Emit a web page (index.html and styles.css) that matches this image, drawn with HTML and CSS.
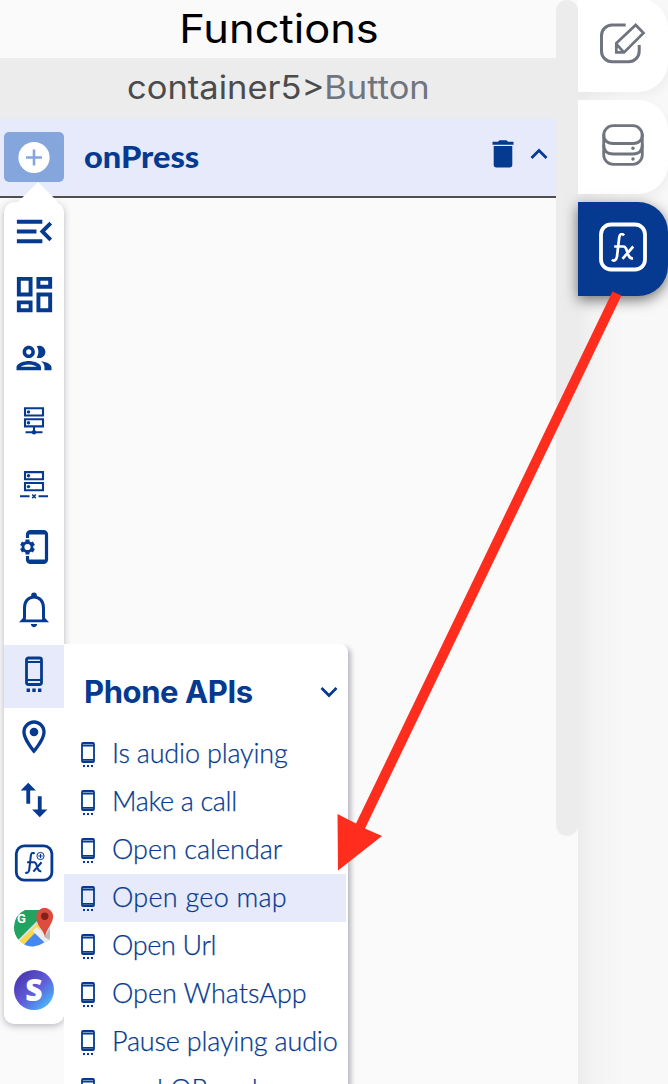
FILE: index.html
```html
<!DOCTYPE html>
<html lang="en">
<head>
<meta charset="utf-8">
<title>Functions</title>
<link rel="stylesheet" href="styles.css">
</head>
<body>
<svg class="defs" aria-hidden="true">
  <symbol id="phone" viewBox="0 0 40 40">
    <rect x="12.500" y="4" width="15" height="26.500" rx="2" fill="none" stroke="currentColor" stroke-width="2.800"/>
    <path d="M12 8h16M12 26h16" stroke="currentColor" stroke-width="2"/>
    <path d="M12.600 36.300H16M18.300 36.300h3.400M24 36.300h3.400" stroke="currentColor" stroke-width="3.400"/>
  </symbol>
  <symbol id="phone-small" viewBox="0 0 14 27">
    <path d="M2 2h10a1 1 0 0 1 1 1v17a1 1 0 0 1-1 1H2a1 1 0 0 1-1-1V3a1 1 0 0 1 1-1zM1 4.500h12M1 18.800h12" fill="none" stroke="currentColor" stroke-width="1.800"/>
    <path d="M2 24.900h2M6 24.900h2M10 24.900h2" stroke="currentColor" stroke-width="2"/>
  </symbol>
  <symbol id="fx" viewBox="0 0 24 29">
    <path d="M13 2.500C11-.2 8.800.9 8.200 4.500L6 23.500C5.300 27.500 2.700 28.500.9 26.600M3.200 13.500h9.300c1.800 0 2.500 1.500 3.300 4l1.600 4.500c.8 2.200 1.800 3.800 4.600 3.300M22.300 13.500L11.500 25.800" fill="none" stroke="currentColor" stroke-width="2.700"/>
  </symbol>
</svg>

<div class="app">
  <main class="panel">
    <h1 class="title"><span>Functions</span></h1>
    <div class="crumb"><span class="path">container5&gt;<span class="leaf">Button</span></span></div>
    <div class="event">
      <button class="add" aria-label="Add"><svg width="32" height="32" viewBox="0 0 32 32"><circle cx="16" cy="16.500" r="15.600" fill="#fff"/><path d="M16 8.500v16M8 16.500h16" stroke="#84a6dc" stroke-width="2.600"/></svg></button>
      <h2 class="event-name">onPress</h2>
      <svg class="trash" width="22" height="28" viewBox="0 0 22 28" fill="currentColor"><path d="M.5 1.700H6L7.500.3h7L16 1.700h5.500v3H.5zM1.700 6h18.600v18.800a2.700 2.700 0 0 1-2.700 2.700H4.400a2.700 2.700 0 0 1-2.700-2.700z"/></svg>
      <svg class="chev" width="18" height="12" viewBox="0 0 18 12"><path d="M1.500 10L9 2.500l7.500 7.500" fill="none" stroke="currentColor" stroke-width="2.700"/></svg>
    </div>

    <nav class="rail">
      <div class="cell"><svg width="47" height="47" viewBox="0 0 24 24" fill="currentColor"><path d="M3 18h13v-2H3v2zm0-5h10v-2H3v2zm0-7v2h13V6H3zm18 9.590L17.420 12 21 8.410 19.590 7l-5 5 5 5L21 15.590z"/></svg></div>
      <div class="cell"><svg width="47" height="47" viewBox="0 0 24 24" fill="currentColor"><path d="M19 5v2h-4V5h4M9 5v6H5V5h4m10 8v6h-4v-6h4M9 17v2H5v-2h4M21 3h-8v6h8V3zM11 3H3v10h8V3zm10 8h-8v10h8V11zm-10 4H3v6h8v-6z"/></svg></div>
      <div class="cell"><svg width="42" height="42" viewBox="0 0 24 24" fill="currentColor"><path d="M9 13.750c-2.340 0-7 1.170-7 3.500V19h14v-1.750c0-2.330-4.660-3.500-7-3.500zM4.340 17c.84-.58 2.870-1.250 4.660-1.250s3.820.67 4.660 1.250H4.340zM9 12c1.930 0 3.500-1.570 3.500-3.500S10.930 5 9 5 5.500 6.570 5.500 8.500 7.070 12 9 12zm0-5c.83 0 1.500.67 1.500 1.500S9.830 10 9 10s-1.500-.67-1.500-1.500S8.170 7 9 7zm7.040 6.810c1.160.84 1.960 1.960 1.960 3.440V19h4v-1.750c0-2.020-3.500-3.170-5.960-3.440zM15 12c1.930 0 3.500-1.570 3.500-3.500S16.930 5 15 5c-.54 0-1.040.13-1.500.35.63.89 1 1.980 1 3.150s-.37 2.260-1 3.150c.46.22.96.35 1.500.35z"/></svg></div>
      <div class="cell"><svg width="40" height="40" viewBox="0 0 40 40" fill="none" stroke="currentColor" stroke-width="2.100"><path d="M11 7.300h18v7.200H11zM11 18.200h18v7.200H11zM20 25v6M11.500 31.300h17"/><g fill="currentColor" stroke="none"><circle cx="14.500" cy="10.900" r="1.700"/><circle cx="14.500" cy="21.800" r="1.700"/><circle cx="20" cy="31.300" r="2.200"/></g></svg></div>
      <div class="cell"><svg width="40" height="40" viewBox="0 0 40 40" fill="none" stroke="currentColor" stroke-width="2.100"><path d="M11 8.100h18v7.200H11zM11 19h18v7.200H11zM6 32.300h9.500M24.500 32.300H34"/><path d="M18.200 30.500l3.600 3.600M21.800 30.500l-3.600 3.600" stroke-width="1.500"/><g fill="currentColor" stroke="none"><circle cx="14.500" cy="11.700" r="1.700"/><circle cx="14.500" cy="22.600" r="1.700"/></g></svg></div>
      <div class="cell"><svg width="40" height="40" viewBox="0 0 40 40" fill="none" stroke="currentColor"><path d="M13.500 11V7.500a3 3 0 0 1 3-3H29.500a3 3 0 0 1 3 3v25a3 3 0 0 1-3 3h-13a3 3 0 0 1-3-3V29" stroke-width="3.200"/><path d="M15 6h16M15 34h16" stroke-width="3"/><circle cx="13.500" cy="20" r="4.500" stroke-width="2.800"/><path d="M13.500 12.600v3M13.500 24.400v3M7.100 16.300l2.600 1.500M17.300 22.200l2.600 1.500M7.100 23.700l2.600-1.500M17.300 17.800l2.600-1.500" stroke-width="4"/></svg></div>
      <div class="cell"><svg width="40" height="40" viewBox="0 0 40 40" fill="none" stroke="currentColor" stroke-width="3"><path d="M10.500 31V18c0-6.500 3.700-11 9.500-11s9.500 4.500 9.500 11v13"/><path d="M5 32.300l4-4.200h22l4 4.200z" fill="currentColor" stroke="none"/><path d="M11.900 27h16.200v2.500H11.900z" fill="#fff" stroke="none"/><path d="M17.200 7V5.200a2.800 2.800 0 0 1 5.600 0V7zM16.800 34h6.400c-.5 4.200-5.900 4.200-6.400 0z" fill="currentColor" stroke="none"/></svg></div>
      <div class="cell on"><svg width="40" height="40"><use href="#phone"/></svg></div>
      <div class="cell"><svg width="40" height="40" viewBox="0 0 24 24" fill="currentColor"><path d="M12 2C8.130 2 5 5.130 5 9c0 5.250 7 13 7 13s7-7.750 7-13c0-3.870-3.130-7-7-7zM7 9c0-2.760 2.240-5 5-5s5 2.240 5 5c0 2.880-2.880 7.190-5 9.880C9.920 16.210 7 11.850 7 9z"/><circle cx="12" cy="9" r="2.600"/></svg></div>
      <div class="cell"><svg width="46" height="46" viewBox="0 0 24 24" fill="currentColor"><path d="M16 17.010V10h-2v7.010h-3L15 21l4-3.990h-3zM9 3L5 6.990h3V14h2V6.990h3L9 3z"/></svg></div>
      <div class="cell"><svg width="40" height="40" viewBox="0 0 40 40"><rect x="2.300" y="2.800" width="35.600" height="34.400" rx="8" fill="none" stroke="currentColor" stroke-width="2.800"/><use href="#fx" x="10" y="9" width="19.500" height="22"/><circle cx="26.500" cy="13" r="3.600" fill="#fff" stroke="currentColor" stroke-width="1"/><path d="M26.500 10.800v4.400M24.300 13h4.400" stroke="currentColor" stroke-width="1.100"/></svg></div>
      <div class="cell"><svg width="40" height="40" viewBox="0 0 40 40">
        <clipPath id="disc"><path d="M11 3A19.500 19.500 0 0 0 0 20a19 19 0 0 0 19.500 19.500A26 26 0 0 0 31 35q5 0 5-5V3z"/></clipPath>
        <g clip-path="url(#disc)"><path d="M0 3h37v37H0z" fill="#dedede"/><path d="M0 0h37L0 37z" fill="#21a362"/><path d="M7 41L21.500 24 38 41z" fill="#4688f1"/><path d="M2 37.500L23.500 16.500l3.500 3.500L7 40z" fill="#fcd749"/><path d="M18.500 24l4-4 17 17v7z" fill="#eee"/><path d="M30.500 30L37 20v14z" fill="#bbb"/></g>
        <path d="M31 30.500c-1-8-8.500-11-8.500-19.500a8.400 8.400 0 0 1 5-9.500q3-1.500 6 0a8.400 8.400 0 0 1 5.500 9.500C38 18 32 22 31 30.500z" fill="#dd4b3e"/><circle cx="30.700" cy="9.200" r="3.700" fill="#80221c"/>
        <text class="map-g" x="3" y="16">G</text></svg></div>
      <div class="cell"><svg width="40" height="40" viewBox="0 0 40 40"><defs><linearGradient id="sky" x1=".1" y1=".1" x2=".9" y2=".95"><stop offset="0" stop-color="#4936b0"/><stop offset=".5" stop-color="#625bd8"/><stop offset=".75" stop-color="#508eea"/><stop offset="1" stop-color="#4fc4fb"/></linearGradient></defs><circle cx="20" cy="20" r="20" fill="url(#sky)"/><text class="disc-s" x="20" y="30.500" text-anchor="middle">S</text></svg></div>
    </nav>

    <section class="menu">
      <header class="menu-head"><h3>Phone APIs</h3><svg width="18" height="12" viewBox="0 0 18 12"><path d="M1.500 2L9 9.500 16.500 2" fill="none" stroke="currentColor" stroke-width="2.700"/></svg></header>
      <ul>
        <li class="snug"><svg class="mini"><use href="#phone-small"/></svg><span>Is audio playing</span></li>
        <li class="tight"><svg class="mini"><use href="#phone-small"/></svg><span>Make a call</span></li>
        <li><svg class="mini"><use href="#phone-small"/></svg><span>Open calendar</span></li>
        <li class="on loose"><svg class="mini"><use href="#phone-small"/></svg><span>Open geo map</span></li>
        <li class="tight"><svg class="mini"><use href="#phone-small"/></svg><span>Open Url</span></li>
        <li><svg class="mini"><use href="#phone-small"/></svg><span>Open WhatsApp</span></li>
        <li class="snug"><svg class="mini"><use href="#phone-small"/></svg><span>Pause playing audio</span></li>
        <li><svg class="mini"><use href="#phone-small"/></svg><span>read QR code</span></li>
      </ul>
    </section>
  </main>

  <div class="track"><div class="thumb"></div></div>

  <aside class="tabs">
    <div class="tab"><svg width="48" height="46" viewBox="0 0 48 46" fill="none" stroke="#6f747e" stroke-width="3"><path d="M26.700 5H13a10.500 10.500 0 0 0-10.500 10.500v15.700A10.500 10.500 0 0 0 13 41.700h16.700a10.500 10.500 0 0 0 10.500-10.500v-6.200"/><path d="M17.300 23.200L36.700 5l7.800 8-19.500 19.400h-7.700zM17.300 24l7.700 8.400" stroke-width="2.700"/></svg></div>
    <div class="tab"><svg width="44" height="44" viewBox="0 0 44 44" fill="none" stroke="#6f747e" stroke-width="2.800"><rect x="2.700" y="2.700" width="38.600" height="38.600" rx="9.500"/><path d="M2.700 11q0 9.500 9.500 9.500h19.600q9.500 0 9.500-9.500M2.700 21.500q0 9.500 9.500 9.500h19.600q9.500 0 9.500-9.500"/><circle cx="32" cy="25.200" r="1.700" fill="#6f747e" stroke="none"/><circle cx="32" cy="36" r="1.700" fill="#6f747e" stroke="none"/></svg></div>
    <div class="tab active"><svg width="48" height="50" viewBox="0 0 48 50"><rect x="2" y="2.500" width="44" height="45" rx="10" fill="none" stroke="currentColor" stroke-width="3.800"/><use href="#fx" x="12" y="11" width="24" height="29"/></svg></div>
  </aside>
</div>

<svg class="pointer" width="668" height="1084" viewBox="0 0 668 1084" fill="#ff2d1e"><path d="M612.500 291.500L621.500 295.500 365 828.500l17 7.500L338 870.500 337.500 814l18.500 9.500z"/></svg>
</body>
</html>
```
FILE: styles.css
```css
* { box-sizing: border-box; margin: 0; padding: 0; }
body { width: 668px; height: 1084px; overflow: hidden; background: #fafafa; color: #053a90; font-family: Lato, "Liberation Sans", sans-serif; }
svg { display: block; flex: none; overflow: visible; }
.defs { position: absolute; width: 0; height: 0; }
.app { display: grid; grid-template-columns: 556px 22px 90px; height: 1084px; }

.panel { position: relative; height: 1084px; overflow: hidden; }
.title { height: 58px; display: flex; justify-content: center; align-items: center; color: #000; font: 400 40px/56px Inter, sans-serif; padding-left: 2px; }
.title span { transform: scaleX(1.085); }
.crumb { height: 60px; display: flex; justify-content: center; align-items: center; background: #ececec; color: #4b4b4b; font: 400 32px/58px Inter, sans-serif; }
.path { transform: scaleX(1.078); }
.leaf { color: #6f747e; }
.event { height: 80px; display: flex; align-items: center; padding: 0 8px 0 4px; background: #e6eafb; border-bottom: 2px solid #4f4f4f; }
.add { width: 60px; height: 50px; display: flex; align-items: center; justify-content: center; border: 0; border-radius: 5px; background: #84a6dc; margin-right: 20px; }
.event-name { flex: 1; font: 900 30px/40px Lato, sans-serif; transform: scaleX(1.085); transform-origin: left; padding-bottom: 2px; }
.trash { margin: 0 16px 6px 0; }
.chev { margin-bottom: 6px; }

.rail { position: relative; width: 60px; height: 822px; margin: 4px 0 0 4px; display: grid; grid-template-rows: repeat(13, 1fr); background: #fff; border-radius: 10px; box-shadow: 0 2px 7px rgba(30, 30, 60, .3); }
.rail::before { content: ""; position: absolute; left: 14px; top: -20px; border: 20px solid transparent; border-top: 0; border-bottom-color: #fff; }
.cell { display: flex; align-items: center; justify-content: center; min-height: 0; padding-bottom: 5px; }
.cell.on { background: #e6eafb; }
.map-g { font: 700 13px Roboto, sans-serif; fill: #fff; }
.disc-s { font: 800 30px "Open Sans", sans-serif; fill: #fff; }

.menu { position: absolute; left: 64px; top: 644px; width: 284px; height: 480px; background: #fff; border-radius: 0 8px 0 0; box-shadow: 3px 3px 5px rgba(30, 30, 60, .3); clip-path: inset(0 -12px 0 0); }
.menu-head { height: 86px; display: flex; align-items: center; justify-content: space-between; padding: 10px 10px 0 20px; }
.menu-head h3 { font: 700 31px/40px Inter, sans-serif; letter-spacing: -.4px; }
.menu ul { list-style: none; padding-right: 2px; }
.menu li { height: 48px; display: flex; align-items: center; padding: 0 0 3px 17px; gap: 17px; font: 300 27px/40px Lato, sans-serif; -webkit-text-stroke: .25px currentColor; white-space: nowrap; }
.menu li.on { background: #e6eafb; }
.snug { letter-spacing: -.18px; }
.tight { letter-spacing: -.35px; }
.loose { letter-spacing: .25px; }
.mini { width: 14px; height: 27px; margin-top: 3px; }

.thumb { height: 836px; border-radius: 11px; background: #ececec; }
.tabs { display: flex; flex-direction: column; gap: 8px; height: 1084px; background: linear-gradient(90deg, #ececec, #f3f3f3 16px, #f8f8f8 46px); }
.tab { height: 94px; flex: none; display: flex; align-items: center; justify-content: center; background: #fff; border-radius: 0 30px 30px 0; box-shadow: 3px 5px 10px rgba(0, 0, 0, .035); }
.tab:first-child { margin-top: -2px; padding-bottom: 4px; }
.tab:nth-child(2) { padding-bottom: 4px; }
.tab.active { background: #053a90; color: #fff; box-shadow: 0 4px 14px rgba(0, 0, 0, .55); padding-bottom: 4px; }
.pointer { position: absolute; left: 0; top: 0; }
```
